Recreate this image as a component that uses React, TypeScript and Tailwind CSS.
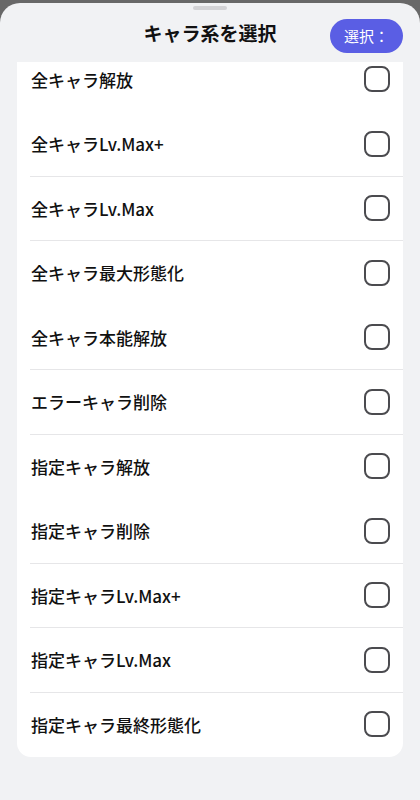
const items = [
  { label: "全キャラ解放", line: false },
  { label: "全キャラLv.Max+", line: true },
  { label: "全キャラLv.Max", line: true },
  { label: "全キャラ最大形態化", line: false },
  { label: "全キャラ本能解放", line: true },
  { label: "エラーキャラ削除", line: true },
  { label: "指定キャラ解放", line: false },
  { label: "指定キャラ削除", line: true },
  { label: "指定キャラLv.Max+", line: true },
  { label: "指定キャラLv.Max", line: true },
  { label: "指定キャラ最終形態化", line: false },
];

const Row = ({ label, line, first }: { label: string; line: boolean; first: boolean }) => {
  return (
    <div className={`flex h-[64.5px] shrink-0 flex-col ${first ? "-mt-[14.5px]" : ""}`}>
      <div className="flex flex-1 items-center justify-between pl-[14px] pr-[13px]">
        <span className="text-[17px] font-medium text-[#111]">{label}</span>
        <div className="h-[26px] w-[26px] rounded-[8px] border-2 border-[#4b4b4f]" />
      </div>
      <div className={`ml-[13px] h-px ${line ? "bg-[#e6e6e8]" : "bg-transparent"}`} />
    </div>
  );
};

export default function App() {
  return (
    <div
      className="flex h-[800px] w-[420px] flex-col bg-[#686868] pt-[3px]"
      style={{ fontFamily: '"Noto Sans CJK JP", "Noto Sans", sans-serif' }}
    >
      <div className="flex flex-1 flex-col rounded-t-[20px] bg-[#f1f2f4]">
        {/* handle */}
        <div className="flex justify-center pt-[3px]">
          <div className="h-[4px] w-[34px] rounded-full bg-[#d3d3d6]" />
        </div>

        {/* header */}
        <div className="grid h-[52px] grid-cols-[1fr_auto_1fr] items-center px-[17px]">
          <div />
          <h1 className="-mt-[6px] text-[19px] font-bold text-[#111]">キャラ系を選択</h1>
          <div className="flex justify-end">
            <button className="h-[34px] w-[73px] rounded-full bg-[#5a5ee4] text-[15px] text-white">
              選択：
            </button>
          </div>
        </div>

        {/* list */}
        <div className="mx-[17px] flex h-[695px] flex-col overflow-hidden rounded-b-[14px] bg-white">
          {items.map((it, i) => (
            <Row key={it.label} label={it.label} line={it.line && i < items.length - 1} first={i === 0} />
          ))}
        </div>
      </div>
    </div>
  );
}
